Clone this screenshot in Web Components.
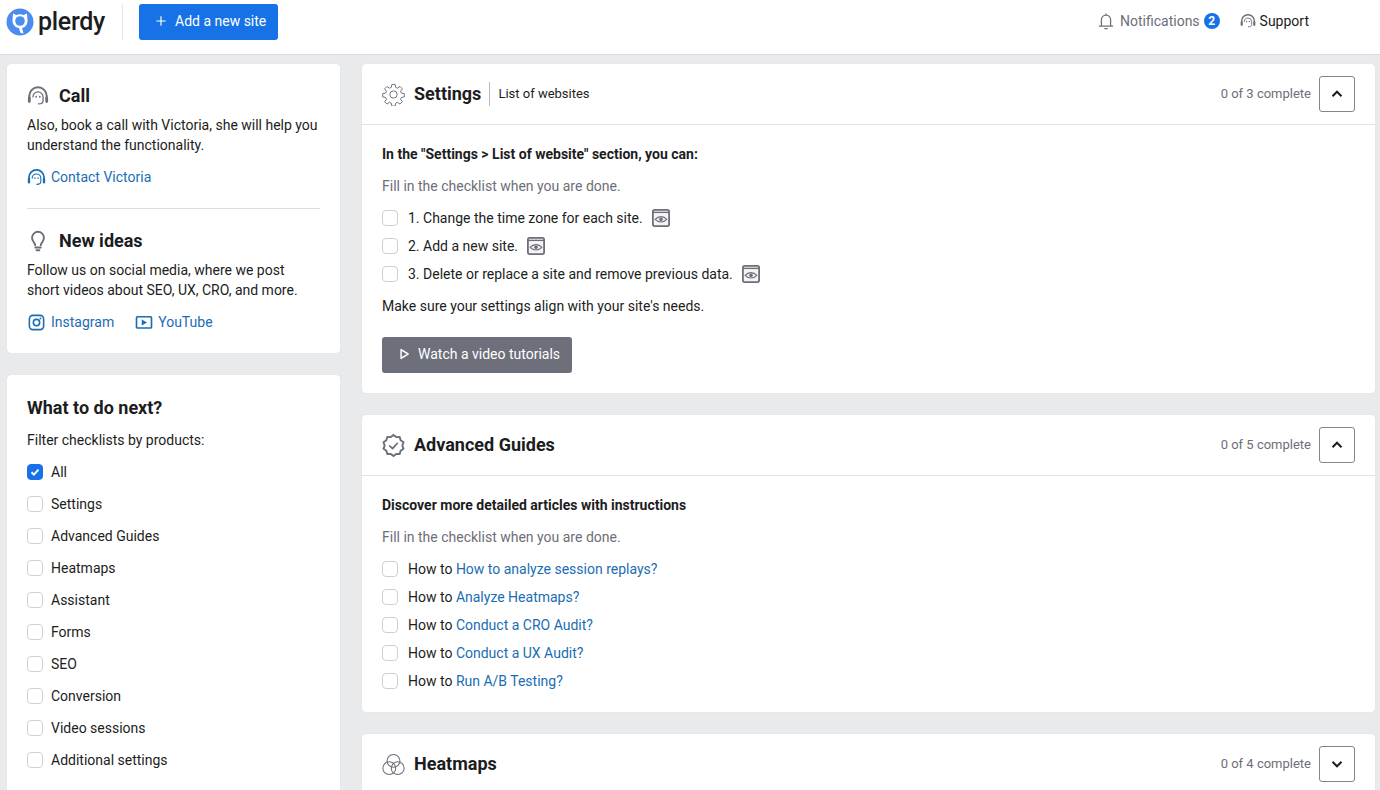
<!doctype html>
<html>
<head>
<meta charset="utf-8">
<title>Plerdy</title>
<style>
  html, body { margin: 0; height: 790px; overflow: hidden; }
  body { background: #e9eaec; font: 14px/20px Roboto, Arial, sans-serif; color: #1c1d21; }
  .page { display: grid; grid-template-columns: 333px 1fr; gap: 22px; padding: 9px 5px 0 7px; }
  .col { display: flex; flex-direction: column; gap: 22px; min-width: 0; }
  a { color: #1a6db3; text-decoration: none; }
</style>
</head>
<body>
<script>
// wavy seal outline for the Advanced Guides icon
function sealPath(bumps, outer, inner) {
  let d = "";
  const step = Math.PI / bumps;
  for (let i = 0; i < bumps * 2; i++) {
    const r = i % 2 ? inner : outer;
    const x = 12 + r * Math.sin(i * step);
    const y = 12 - r * Math.cos(i * step);
    d += (i ? "L" : "M") + x.toFixed(2) + " " + y.toFixed(2);
  }
  return d + "z";
}

// icon shapes, all on a 24 box unless noted
const ICONS = {
  plus: `<path d="M12 4v16M4 12h16" fill="none" stroke="currentColor" stroke-width="2"/>`,
  bell: `<path d="M6.500 17.500v-7a5.500 5.500 0 0 1 11 0v7M4 18h16M10.500 21h3M12 5V3.500" fill="none" stroke="currentColor" stroke-width="1.500" stroke-linecap="round"/>`,
  agent: `<g fill="none" stroke="currentColor" stroke-linecap="round"><path d="M2.500 17v-5a9.500 9.500 0 0 1 19 0v5" stroke-width="2.200"/><path d="M6.500 13a5.500 5.500 0 0 1 11 0v4.500c0 2-2 3.200-5 3.200" stroke-width="1.400"/><path d="M2.500 14v4M21.500 14v4" stroke-width="3"/><path d="M10 12.500v.5M14 12.500v.5" stroke-width="1.800"/></g>`,
  bulb: `<path d="M9 16.500c0-2.500-3.500-3.500-3.500-8a6.500 6.500 0 0 1 13 0c0 4.500-3.500 5.500-3.500 8M9 19h6M10.500 22h3" fill="none" stroke="currentColor" stroke-width="2.100" stroke-linecap="round"/>`,
  insta: `<g fill="none" stroke="currentColor" stroke-width="2"><rect x="3" y="3" width="18" height="18" rx="4.500"/><circle cx="12" cy="12" r="4"/></g><circle cx="17" cy="7" r="1.200" fill="currentColor"/>`,
  youtube: `<rect x="2" y="5" width="20" height="15" rx="1.500" fill="none" stroke="currentColor" stroke-width="2.200"/><path d="M9 8.500v8l7-4z" fill="currentColor"/>`,
  gear: `<g fill="none" stroke="currentColor" stroke-width="1" stroke-linejoin="round"><circle cx="12" cy="12" r="3.800"/><path d="M10.300 1.500h3.400l.6 3.100 1.900.8 2.600-1.800 2.400 2.400-1.800 2.600.8 1.900 3.100.6v3.400l-3.100.6-.8 1.900 1.800 2.600-2.400 2.400-2.600-1.800-1.900.8-.6 3.100h-3.400l-.6-3.100-1.900-.8-2.600 1.800-2.400-2.400 1.800-2.600-.8-1.900-3.100-.6v-3.400l3.100-.6.8-1.900-1.800-2.600 2.400-2.400 2.600 1.800 1.900-.8z"/></g>`,
  badge: `<g fill="none" stroke="currentColor" stroke-linejoin="round" stroke-linecap="round"><path d="${sealPath(10, 11, 9.200)}" stroke-width="2"/><path d="M8 12.500l3 2.800 5-5.600" stroke-width="1.800"/></g>`,
  circles: `<g fill="none" stroke="currentColor" stroke-width="1.100"><circle cx="12" cy="8.200" r="6.700"/><circle cx="7.600" cy="15.800" r="6.700"/><circle cx="16.400" cy="15.800" r="6.700"/></g>`,
  eye: `<rect x="1" y="1" width="18" height="18" rx="2" fill="#f4f4f5" stroke="currentColor" stroke-width="2"/><path d="M1 3h18v1.500H1z" fill="currentColor"/><path d="M3.500 11.500c3.500-4 9.500-4 13 0-3.500 3.800-9.500 3.800-13 0z" fill="none" stroke="currentColor" stroke-width="1.200"/><circle cx="10" cy="11.500" r="2" fill="currentColor"/>`,
  play: `<path d="M7 4.500l12 7.500-12 7.500z" fill="none" stroke="currentColor" stroke-width="2.600" stroke-linejoin="round"/>`,
  up: `<path d="M6 15l6-6 6 6" fill="none" stroke="currentColor" stroke-width="2.600"/>`,
  down: `<path d="M6 9l6 6 6-6" fill="none" stroke="currentColor" stroke-width="2.600"/>`,
};

class AppIcon extends HTMLElement {
  connectedCallback() {
    const name = this.getAttribute("name");
    const size = this.getAttribute("size") || 20;
    const box = name === "eye" ? 20 : 24;
    this.attachShadow({ mode: "open" }).innerHTML = `
      <style>:host { display: inline-flex; flex: none; } svg { display: block; }</style>
      <svg width="${size}" height="${size}" viewBox="0 0 ${box} ${box}">${ICONS[name] || ""}</svg>`;
  }
}

const headerTpl = document.createElement("template");
headerTpl.innerHTML = `
  <style>
    :host { display: flex; align-items: center; height: 54px; background: #fff; border-bottom: 1px solid #d9dade; padding: 0 71px 0 6px; }
    .logo { display: flex; align-items: center; gap: 4px; width: 116px; height: 36px; margin-top: -10px; border-right: 1px solid #e6e7e9; }
    .word { font-size: 25px; font-weight: 500; letter-spacing: -.3px; line-height: 30px; color: #1c1d21; margin-top: -1px; }
    .add { display: flex; align-items: center; gap: 7px; height: 36px; width: 139px; box-sizing: border-box; margin: -10px 0 0 16px; padding: 0 0 2px 15px; background: #1672e6; color: #fff; border-radius: 3px; }
    .right { margin-left: auto; display: flex; align-items: center; margin-top: -12px; }
    .note { color: #6d6e78; margin-left: 4px; }
    .num { width: 16px; height: 16px; border-radius: 50%; background: #1672e6; color: #fff; font-size: 12px; font-weight: 700; line-height: 16px; text-align: center; margin: 0 20px 0 4px; }
    .sup { margin-left: 4px; }
    .bell, .agent { color: #6d6e78; }
  </style>
  <div class="logo">
    <svg width="28" height="28" viewBox="0 0 28 28">
      <circle cx="14" cy="14" r="13.500" fill="#4c8bf0"/>
      <path d="M7 5.500l3.500 1.500a9 9 0 0 1 7 0l3.500-1.500.5 6.500c.5 4.500-2.500 7.500-5.500 8l1.500 5.500-3-.5-1.500-5c-4-.5-6.500-3.500-6.500-7.500z" fill="#fff"/>
      <circle cx="14" cy="13" r="4.800" fill="#4c8bf0"/>
    </svg>
    <span class="word">plerdy</span>
  </div>
  <div class="add"><app-icon name="plus" size="14"></app-icon>Add a new site</div>
  <div class="right">
    <app-icon class="bell" name="bell" size="20"></app-icon>
    <span class="note">Notifications</span>
    <span class="num">2</span>
    <app-icon class="agent" name="agent" size="16"></app-icon>
    <span class="sup">Support</span>
  </div>`;
class AppHeader extends HTMLElement {
  constructor() {
    super();
    this.attachShadow({ mode: "open" }).appendChild(headerTpl.content.cloneNode(true));
  }
}

const sideTpl = document.createElement("template");
sideTpl.innerHTML = `
  <style>
    :host { display: block; background: #fff; border-radius: 4px; padding: 20px 20px 21px; box-shadow: 0 0 1px rgba(0,0,0,.12); }
    ::slotted(hr) { border: 0; border-top: 1px solid #dcdde0; margin: 21px 0 20px; }
  </style>
  <slot></slot>`;
class SideCard extends HTMLElement {
  constructor() {
    super();
    this.attachShadow({ mode: "open" }).appendChild(sideTpl.content.cloneNode(true));
  }
}

const blockTpl = document.createElement("template");
blockTpl.innerHTML = `
  <style>
    :host { display: block; }
    h3 { display: flex; align-items: center; gap: 10px; margin: 0 0 7px; font-size: 18px; line-height: 24px; font-weight: 700; color: #1c1d21; }
    .ic { color: #6d6e78; display: flex; width: 22px; justify-content: center; }
    .links { display: flex; gap: 21px; margin-top: 12px; }
  </style>
  <h3><span class="ic"><slot name="icon"></slot></span><span id="t"></span></h3>
  <slot></slot>
  <div class="links"><slot name="link"></slot></div>`;
class InfoBlock extends HTMLElement {
  constructor() {
    super();
    this.attachShadow({ mode: "open" }).appendChild(blockTpl.content.cloneNode(true));
  }
  connectedCallback() {
    this.shadowRoot.getElementById("t").textContent = this.getAttribute("heading");
  }
}

const linkTpl = document.createElement("template");
linkTpl.innerHTML = `
  <style>
    :host { display: inline-flex; align-items: center; gap: 5px; color: #1a6db3; }
  </style>
  <slot name="icon"></slot><slot></slot>`;
class IconLink extends HTMLElement {
  constructor() {
    super();
    this.attachShadow({ mode: "open" }).appendChild(linkTpl.content.cloneNode(true));
  }
}

const checkTpl = document.createElement("template");
checkTpl.innerHTML = `
  <style>
    :host { display: flex; align-items: center; gap: var(--gap, 10px); height: var(--row, 28px); }
    .box { flex: none; width: 16px; height: 16px; box-sizing: border-box; border: 1px solid #cfd0d4; border-radius: 4px; background: #fff; display: flex; align-items: center; justify-content: center; }
    :host([checked]) .box { background: #1672e6; border-color: #1672e6; }
    svg { display: none; }
    :host([checked]) svg { display: block; }
  </style>
  <span class="box"><svg width="10" height="10" viewBox="0 0 10 10"><path d="M1.500 5.200l2.400 2.400 4.600-5" fill="none" stroke="#fff" stroke-width="2"/></svg></span>
  <span><slot></slot></span>`;
class CheckRow extends HTMLElement {
  constructor() {
    super();
    this.attachShadow({ mode: "open" }).appendChild(checkTpl.content.cloneNode(true));
  }
}

const guideTpl = document.createElement("template");
guideTpl.innerHTML = `
  <style>
    :host { display: block; background: #fff; border-radius: 4px; box-shadow: 0 0 1px rgba(0,0,0,.12); }
    .head { display: flex; align-items: center; height: 60px; padding: 0 20px; border-bottom: 1px solid #e2e3e6; }
    .ic { color: #6d6e78; display: flex; margin-right: 9px; }
    h2 { margin: 0; font-size: 18px; line-height: 24px; font-weight: 700; color: #1c1d21; }
    .sub { display: none; margin-left: 8px; padding-left: 8px; border-left: 1px solid #b9bac0; font-size: 13px; line-height: 24px; }
    :host([sub]) .sub { display: block; }
    .count { margin-left: auto; color: #6d6e78; font-size: 13px; margin-right: 8px; }
    .tog { width: 36px; height: 36px; box-sizing: border-box; border: 1px solid #84858e; border-radius: 3px; display: flex; align-items: center; justify-content: center; color: #1c1d21; }
    .body { padding: 19px 20px 20px; }
    :host([closed]) .body { display: none; }
  </style>
  <div class="head">
    <span class="ic"><slot name="icon"></slot></span>
    <h2 id="title"></h2>
    <span class="sub" id="sub"></span>
    <span class="count" id="count"></span>
    <span class="tog" id="tog"></span>
  </div>
  <div class="body"><slot></slot></div>`;
class GuideCard extends HTMLElement {
  constructor() {
    super();
    this.attachShadow({ mode: "open" }).appendChild(guideTpl.content.cloneNode(true));
  }
  connectedCallback() {
    const $ = (id) => this.shadowRoot.getElementById(id);
    $("title").textContent = this.getAttribute("heading");
    $("sub").textContent = this.getAttribute("sub") || "";
    $("count").textContent = this.getAttribute("count");
    $("tog").innerHTML = `<app-icon name="${this.hasAttribute("closed") ? "down" : "up"}" size="18"></app-icon>`;
  }
}

customElements.define("app-icon", AppIcon);
customElements.define("app-header", AppHeader);
customElements.define("side-card", SideCard);
customElements.define("info-block", InfoBlock);
customElements.define("icon-link", IconLink);
customElements.define("check-row", CheckRow);
customElements.define("guide-card", GuideCard);
</script>

<app-header></app-header>
<div class="page">
  <div class="col">
    <side-card>
      <info-block heading="Call">
        <app-icon slot="icon" name="agent" size="22"></app-icon>
        Also, book a call with Victoria, she will help you understand the functionality.
        <icon-link slot="link"><app-icon slot="icon" name="agent" size="19"></app-icon>Contact Victoria</icon-link>
      </info-block>
      <hr>
      <info-block heading="New ideas">
        <app-icon slot="icon" name="bulb" size="22"></app-icon>
        Follow us on social media, where we post<br>short videos about SEO, UX, CRO, and more.
        <icon-link slot="link"><app-icon slot="icon" name="insta" size="19"></app-icon>Instagram</icon-link>
        <icon-link slot="link"><app-icon slot="icon" name="youtube" size="18"></app-icon>YouTube</icon-link>
      </info-block>
    </side-card>
    <side-card>
      <div style="font-size:18px;line-height:24px;font-weight:700;margin:1px 0 10px">What to do next?</div>
      <div style="margin-bottom:6px">Filter checklists by products:</div>
      <div style="--row:32px;--gap:8px">
        <check-row checked>All</check-row>
        <check-row>Settings</check-row>
        <check-row>Advanced Guides</check-row>
        <check-row>Heatmaps</check-row>
        <check-row>Assistant</check-row>
        <check-row>Forms</check-row>
        <check-row>SEO</check-row>
        <check-row>Conversion</check-row>
        <check-row>Video sessions</check-row>
        <check-row>Additional settings</check-row>
      </div>
    </side-card>
  </div>
  <div class="col">
    <guide-card heading="Settings" sub="List of websites" count="0 of 3 complete">
      <app-icon slot="icon" name="gear" size="23"></app-icon>
      <div style="font-weight:700">In the "Settings &gt; List of website" section, you can:</div>
      <div style="color:#6d6e78;margin:12px 0 8px">Fill in the checklist when you are done.</div>
      <check-row><span style="display:flex;align-items:center;gap:9px">1. Change the time zone for each site. <app-icon name="eye" size="18" style="color:#6d6e78"></app-icon></span></check-row>
      <check-row><span style="display:flex;align-items:center;gap:9px">2. Add a new site. <app-icon name="eye" size="18" style="color:#6d6e78"></app-icon></span></check-row>
      <check-row><span style="display:flex;align-items:center;gap:9px">3. Delete or replace a site and remove previous data. <app-icon name="eye" size="18" style="color:#6d6e78"></app-icon></span></check-row>
      <div style="margin:8px 0 21px">Make sure your settings align with your site's needs.</div>
      <div style="display:flex;align-items:center;gap:7px;width:190px;height:36px;box-sizing:border-box;padding:0 0 2px 15px;background:#6d6f7b;color:#fff;border-radius:3px"><app-icon name="play" size="14"></app-icon>Watch a video tutorials</div>
    </guide-card>
    <guide-card heading="Advanced Guides" count="0 of 5 complete">
      <app-icon slot="icon" name="badge" size="23"></app-icon>
      <div style="font-weight:700">Discover more detailed articles with instructions</div>
      <div style="color:#6d6e78;margin:12px 0 8px">Fill in the checklist when you are done.</div>
      <check-row>How to <a href="#">How to analyze session replays?</a></check-row>
      <check-row>How to <a href="#">Analyze Heatmaps?</a></check-row>
      <check-row>How to <a href="#">Conduct a CRO Audit?</a></check-row>
      <check-row>How to <a href="#">Conduct a UX Audit?</a></check-row>
      <div style="margin-bottom:-3px"><check-row>How to <a href="#">Run A/B Testing?</a></check-row></div>
    </guide-card>
    <guide-card heading="Heatmaps" count="0 of 4 complete" closed>
      <app-icon slot="icon" name="circles" size="23"></app-icon>
    </guide-card>
  </div>
</div>
</body>
</html>
